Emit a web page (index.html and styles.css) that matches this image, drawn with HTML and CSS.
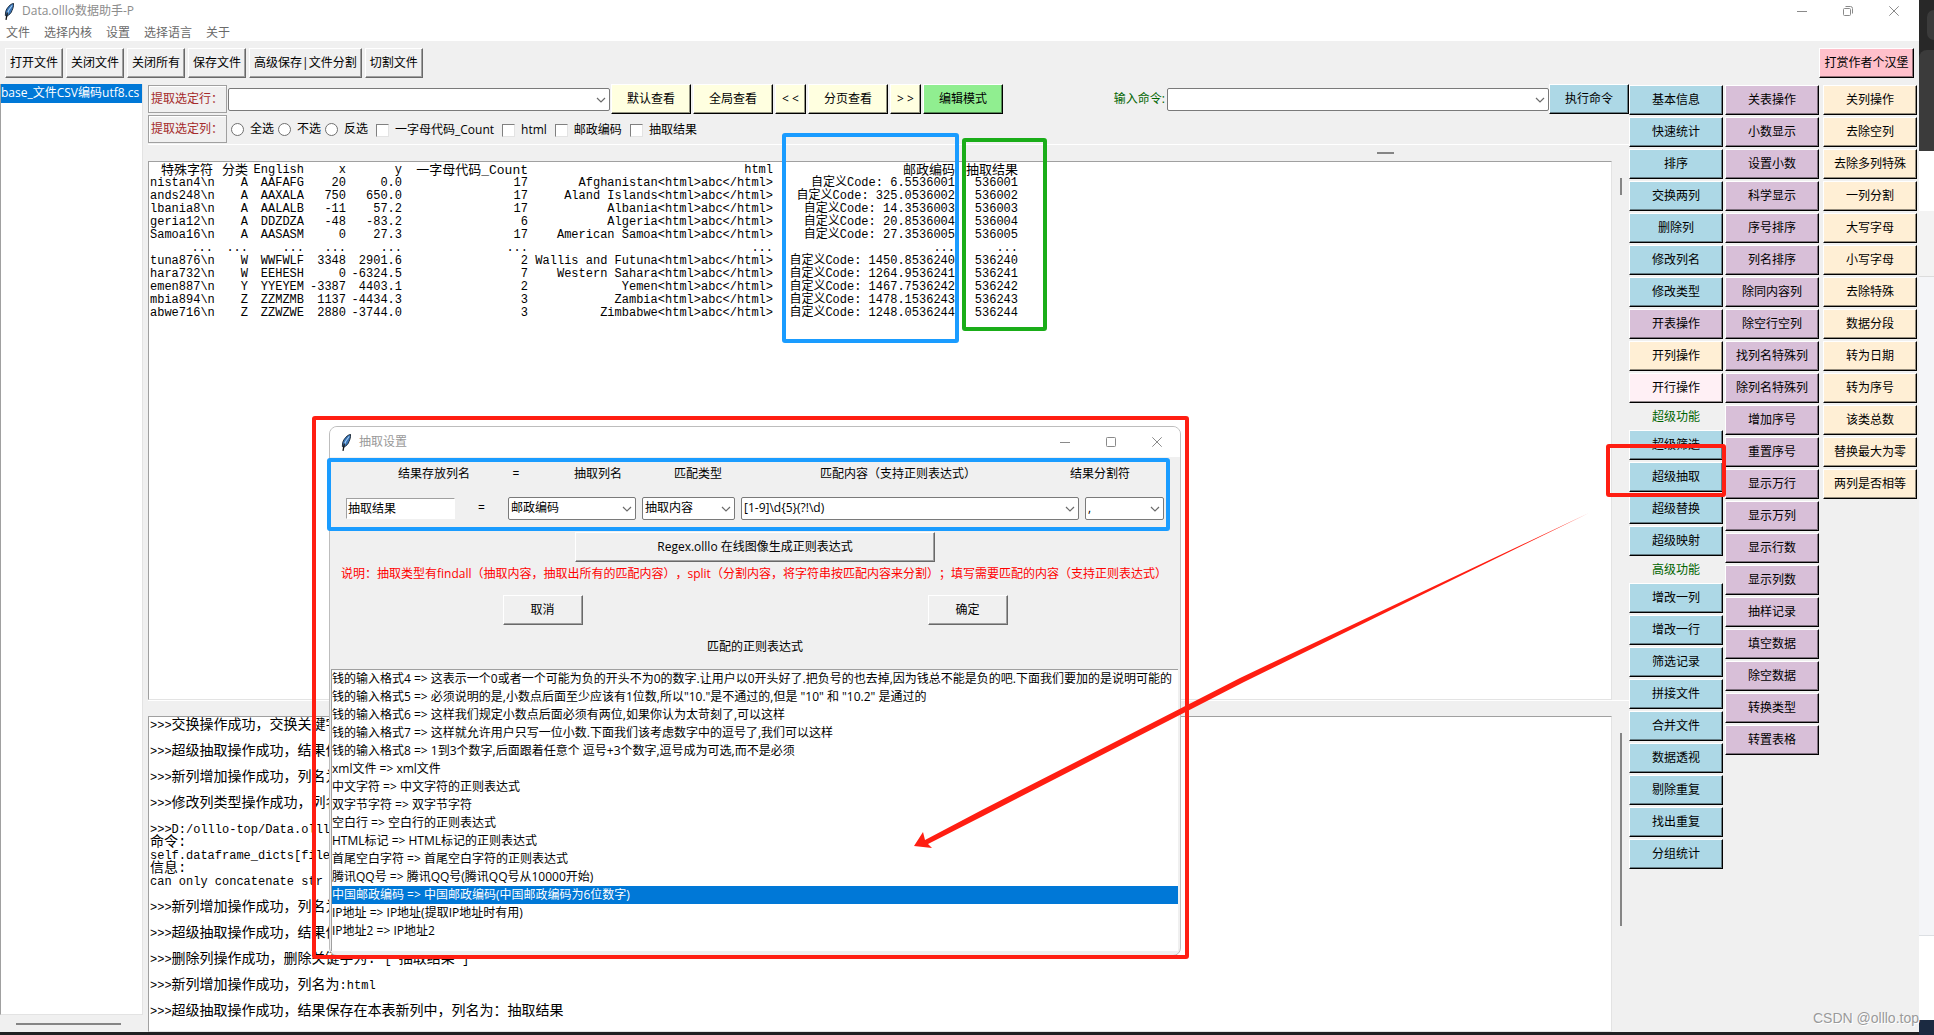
FILE: index.html
```html
<!DOCTYPE html>
<html lang="zh-CN">
<head>
<meta charset="utf-8">
<title>Data.olllo数据助手-P</title>
<link rel="stylesheet" href="styles.css">
</head>
<body>
<svg class="defs" aria-hidden="true">
  <symbol id="chevron" viewBox="0 0 10 6"><path d="M1 1l4 4 4-4" fill="none" stroke="#6b6b6b" stroke-width="1.2"/></symbol>
  <symbol id="feather" viewBox="0 0 10 17">
    <path d="M9.5.3C6.500 1 3 4.500 1.700 8.500L1.300 12.500 2.500 13.500C5 12 7.500 10 8 7.500 9 5.500 9.800 3 9.500.3z" fill="#3a76b8" stroke="#16212e" stroke-width=".9"/>
    <path d="M8.200 2.500C6 5 4 8 3.200 11" fill="none" stroke="#a9d1f5" stroke-width="1.100"/>
    <path d="M3.400 9.500L2 16.800" fill="none" stroke="#111" stroke-width="1.300"/>
  </symbol>
  <symbol id="minimize" viewBox="0 0 10 10"><path d="M0 5.500h10" stroke="#8a8a8a"/></symbol>
  <symbol id="maximize" viewBox="0 0 10 10"><rect x=".5" y=".5" width="9" height="9" rx=".8" fill="none" stroke="#8a8a8a"/></symbol>
  <symbol id="restore" viewBox="0 0 10 10"><rect x=".5" y="2.500" width="7" height="7" rx="1" fill="none" stroke="#8a8a8a"/><path d="M2.500.5h5a2 2 0 0 1 2 2v5" fill="none" stroke="#8a8a8a"/></symbol>
  <symbol id="close" viewBox="0 0 10 10"><path d="M.3.3l9.400 9.400M9.700.3L.3 9.700" stroke="#8a8a8a"/></symbol>
</svg>
<div class="desktop">
  <div class="app">
    <header class="titlebar">
      <svg class="feather"><use href="#feather"/></svg>
      <span class="title">Data.olllo数据助手-P</span>
      <div class="window-controls">
        <button aria-label="最小化"><svg><use href="#minimize"/></svg></button>
        <button aria-label="还原"><svg><use href="#restore"/></svg></button>
        <button aria-label="关闭"><svg><use href="#close"/></svg></button>
      </div>
    </header>
    <nav class="menubar">
      <a href="#">文件</a><a href="#">选择内核</a><a href="#">设置</a><a href="#">选择语言</a><a href="#">关于</a>
    </nav>
    <div class="toolbar">
      <button class="btn">打开文件</button>
      <button class="btn">关闭文件</button>
      <button class="btn">关闭所有</button>
      <button class="btn">保存文件</button>
      <button class="btn">高级保存|文件分割</button>
      <button class="btn">切割文件</button>
      <button class="btn pink push">打赏作者个汉堡</button>
    </div>
    <div class="workspace">
      <aside class="files">
        <ul class="file-list" role="listbox" aria-label="文件">
          <li role="option" aria-selected="true">base_文件CSV编码utf8.cs</li>
        </ul>
        <div class="file-scroll"></div>
      </aside>
      <main class="main">
        <div class="control-row">
          <label class="tag" for="rows">提取选定行：</label>
          <span class="combo rows"><select id="rows"><option></option></select><svg><use href="#chevron"/></svg></span>
          <button class="btn yellow wide">默认查看</button>
          <button class="btn yellow wide">全局查看</button>
          <button class="btn yellow step">&lt; &lt;</button>
          <button class="btn yellow wide">分页查看</button>
          <button class="btn yellow step">&gt; &gt;</button>
          <button class="btn green wide">编辑模式</button>
          <label class="command-label" for="command">输入命令:</label>
          <span class="combo command"><select id="command"><option></option></select><svg><use href="#chevron"/></svg></span>
          <button class="btn blue run">执行命令</button>
        </div>
        <div class="column-row">
          <span class="tag">提取选定列：</span>
          <label class="choice"><input type="radio" name="pick">全选</label>
          <label class="choice"><input type="radio" name="pick">不选</label>
          <label class="choice"><input type="radio" name="pick">反选</label>
          <label class="choice check"><input type="checkbox">一字母代码_Count</label>
          <label class="choice check"><input type="checkbox">html</label>
          <label class="choice check"><input type="checkbox">邮政编码</label>
          <label class="choice check"><input type="checkbox">抽取结果</label>
        </div>
        <div class="sash"><span class="grip"></span></div>
        <div class="pane data-pane">
          <div class="textbox">
            <table class="data">
              <colgroup><col class="c1"><col class="c2"><col class="c3"><col class="c4"><col class="c5"><col class="c6"><col class="c7"><col class="c8"><col class="c9"></colgroup>
              <thead><tr><th>特殊字符</th><th>分类</th><th class="latin">English</th><th class="latin">x</th><th class="latin">y</th><th>一字母代码_Count</th><th class="latin">html</th><th>邮政编码</th><th>抽取结果</th></tr></thead>
              <tbody>
              <tr><td>nistan4\n</td><td>A</td><td>AAFAFG</td><td>20</td><td>0.0</td><td>17</td><td>Afghanistan&lt;html&gt;abc&lt;/html&gt;</td><td>自定义Code: 6.5536001</td><td>536001</td></tr>
              <tr><td>ands248\n</td><td>A</td><td>AAXALA</td><td>750</td><td>650.0</td><td>17</td><td>Aland Islands&lt;html&gt;abc&lt;/html&gt;</td><td>自定义Code: 325.0536002</td><td>536002</td></tr>
              <tr><td>lbania8\n</td><td>A</td><td>AALALB</td><td>-11</td><td>57.2</td><td>17</td><td>Albania&lt;html&gt;abc&lt;/html&gt;</td><td>自定义Code: 14.3536003</td><td>536003</td></tr>
              <tr><td>geria12\n</td><td>A</td><td>DDZDZA</td><td>-48</td><td>-83.2</td><td>6</td><td>Algeria&lt;html&gt;abc&lt;/html&gt;</td><td>自定义Code: 20.8536004</td><td>536004</td></tr>
              <tr><td>Samoa16\n</td><td>A</td><td>AASASM</td><td>0</td><td>27.3</td><td>17</td><td>American Samoa&lt;html&gt;abc&lt;/html&gt;</td><td>自定义Code: 27.3536005</td><td>536005</td></tr>
              <tr><td>...</td><td>...</td><td>...</td><td>...</td><td>...</td><td>...</td><td>...</td><td>...</td><td>...</td></tr>
              <tr><td>tuna876\n</td><td>W</td><td>WWFWLF</td><td>3348</td><td>2901.6</td><td>2</td><td>Wallis and Futuna&lt;html&gt;abc&lt;/html&gt;</td><td>自定义Code: 1450.8536240</td><td>536240</td></tr>
              <tr><td>hara732\n</td><td>W</td><td>EEHESH</td><td>0</td><td>-6324.5</td><td>7</td><td>Western Sahara&lt;html&gt;abc&lt;/html&gt;</td><td>自定义Code: 1264.9536241</td><td>536241</td></tr>
              <tr><td>emen887\n</td><td>Y</td><td>YYEYEM</td><td>-3387</td><td>4403.1</td><td>2</td><td>Yemen&lt;html&gt;abc&lt;/html&gt;</td><td>自定义Code: 1467.7536242</td><td>536242</td></tr>
              <tr><td>mbia894\n</td><td>Z</td><td>ZZMZMB</td><td>1137</td><td>-4434.3</td><td>3</td><td>Zambia&lt;html&gt;abc&lt;/html&gt;</td><td>自定义Code: 1478.1536243</td><td>536243</td></tr>
              <tr><td>abwe716\n</td><td>Z</td><td>ZZWZWE</td><td>2880</td><td>-3744.0</td><td>3</td><td>Zimbabwe&lt;html&gt;abc&lt;/html&gt;</td><td>自定义Code: 1248.0536244</td><td>536244</td></tr>
              </tbody>
            </table>
          </div>
          <div class="vscroll"><span class="thumb short"></span></div>
        </div>
        <div class="divider"></div>
        <div class="pane log-pane">
          <div class="textbox log">
            <p><span class="latin">&gt;&gt;&gt;</span>交换操作成功，交换关键字</p>
            <p><span class="latin">&gt;&gt;&gt;</span>超级抽取操作成功，结果保</p>
            <p><span class="latin">&gt;&gt;&gt;</span>新列增加操作成功，列名为</p>
            <p><span class="latin">&gt;&gt;&gt;</span>修改列类型操作成功，列名</p>
            <p><span class="latin">&gt;&gt;&gt;D:/olllo-top/Data.olllo</span><br>命令:<br><span class="latin">self.dataframe_dicts[filen</span><br>信息:<br><span class="latin">can only concatenate str (</span></p>
            <p><span class="latin">&gt;&gt;&gt;</span>新列增加操作成功，列名为</p>
            <p><span class="latin">&gt;&gt;&gt;</span>超级抽取操作成功，结果保</p>
            <p><span class="latin">&gt;&gt;&gt;</span>删除列操作成功，删除关键字为: <span class="latin">['</span>抽取结果<span class="latin">']</span></p>
            <p><span class="latin">&gt;&gt;&gt;</span>新列增加操作成功，列名为<span class="latin">:html</span></p>
            <p><span class="latin">&gt;&gt;&gt;</span>超级抽取操作成功，结果保存在本表新列中，列名为：抽取结果</p>
          </div>
          <div class="vscroll"><span class="thumb long"></span></div>
        </div>
      </main>
      <div class="actions">
        <div class="action-col">
          <button class="btn blue">基本信息</button>
          <button class="btn blue">快速统计</button>
          <button class="btn blue">排序</button>
          <button class="btn blue">交换两列</button>
          <button class="btn blue">删除列</button>
          <button class="btn blue">修改列名</button>
          <button class="btn blue">修改类型</button>
          <button class="btn purple">开表操作</button>
          <button class="btn cream">开列操作</button>
          <button class="btn blush">开行操作</button>
          <h2>超级功能</h2>
          <button class="btn blue">超级筛选</button>
          <button class="btn blue">超级抽取</button>
          <button class="btn blue">超级替换</button>
          <button class="btn blue">超级映射</button>
          <h2>高级功能</h2>
          <button class="btn blue">增改一列</button>
          <button class="btn blue">增改一行</button>
          <button class="btn blue">筛选记录</button>
          <button class="btn blue">拼接文件</button>
          <button class="btn blue">合并文件</button>
          <button class="btn blue">数据透视</button>
          <button class="btn blue">剔除重复</button>
          <button class="btn blue">找出重复</button>
          <button class="btn blue">分组统计</button>
        </div>
        <div class="action-col">
          <button class="btn purple">关表操作</button>
          <button class="btn purple">小数显示</button>
          <button class="btn purple">设置小数</button>
          <button class="btn purple">科学显示</button>
          <button class="btn purple">序号排序</button>
          <button class="btn purple">列名排序</button>
          <button class="btn purple">除同内容列</button>
          <button class="btn purple">除空行空列</button>
          <button class="btn purple">找列名特殊列</button>
          <button class="btn purple">除列名特殊列</button>
          <button class="btn purple">增加序号</button>
          <button class="btn purple">重置序号</button>
          <button class="btn purple">显示万行</button>
          <button class="btn purple">显示万列</button>
          <button class="btn purple">显示行数</button>
          <button class="btn purple">显示列数</button>
          <button class="btn purple">抽样记录</button>
          <button class="btn purple">填空数据</button>
          <button class="btn purple">除空数据</button>
          <button class="btn purple">转换类型</button>
          <button class="btn purple">转置表格</button>
        </div>
        <div class="action-col last">
          <button class="btn cream">关列操作</button>
          <button class="btn cream">去除空列</button>
          <button class="btn cream">去除多列特殊</button>
          <button class="btn cream">一列分割</button>
          <button class="btn cream">大写字母</button>
          <button class="btn cream">小写字母</button>
          <button class="btn cream">去除特殊</button>
          <button class="btn cream">数据分段</button>
          <button class="btn cream">转为日期</button>
          <button class="btn cream">转为序号</button>
          <button class="btn cream">该类总数</button>
          <button class="btn cream">替换最大为零</button>
          <button class="btn cream">两列是否相等</button>
        </div>
      </div>
    </div>
    <div class="taskbar-edge"></div>
    <span class="watermark">CSDN @olllo.top</span>
  </div>
  <div class="behind" aria-hidden="true">
    <div class="dark"><i class="tab"></i><i class="bar"></i></div>
    <div class="white-top"></div>
    <div class="grey-a"></div>
    <div class="grey-b"></div>
    <div class="white-low"></div>
    <div class="navy"></div>
  </div>
</div>

<section class="dialog" role="dialog" aria-label="抽取设置">
  <header class="dialog-title">
    <svg class="feather"><use href="#feather"/></svg>
    <span class="title">抽取设置</span>
    <div class="window-controls">
      <button aria-label="最小化"><svg><use href="#minimize"/></svg></button>
      <button aria-label="最大化"><svg><use href="#maximize"/></svg></button>
      <button aria-label="关闭"><svg><use href="#close"/></svg></button>
    </div>
  </header>
  <div class="heads">
    <label for="f-name">结果存放列名</label><span>=</span><label for="f-col">抽取列名</label><label for="f-type">匹配类型</label><label for="f-regex">匹配内容（支持正则表达式）</label><label for="f-sep">结果分割符</label>
  </div>
  <div class="fields">
    <input id="f-name" class="entry" type="text" value="抽取结果">
    <span class="eq">=</span>
    <span class="combo col"><select id="f-col"><option>邮政编码</option></select><svg><use href="#chevron"/></svg></span>
    <span class="combo type"><select id="f-type"><option>抽取内容</option></select><svg><use href="#chevron"/></svg></span>
    <span class="combo regex"><select id="f-regex"><option>[1-9]\d{5}(?!\d)</option></select><svg><use href="#chevron"/></svg></span>
    <span class="combo sep"><select id="f-sep"><option>,</option></select><svg><use href="#chevron"/></svg></span>
  </div>
  <button class="btn regex-btn">Regex.olllo 在线图像生成正则表达式</button>
  <p class="hint">说明：抽取类型有findall（抽取内容，抽取出所有的匹配内容），split（分割内容，将字符串按匹配内容来分割）；填写需要匹配的内容（支持正则表达式）</p>
  <div class="answers"><div><button class="btn">取消</button></div><div><button class="btn">确定</button></div></div>
  <h2 class="list-label">匹配的正则表达式</h2>
  <ul class="regex-list" role="listbox" aria-label="匹配的正则表达式">
    <li role="option">钱的输入格式4 =&gt; 这表示一个0或者一个可能为负的开头不为0的数字.让用户以0开头好了.把负号的也去掉,因为钱总不能是负的吧.下面我们要加的是说明可能的</li>
    <li role="option">钱的输入格式5 =&gt; 必须说明的是,小数点后面至少应该有1位数,所以"10."是不通过的,但是 "10" 和 "10.2" 是通过的</li>
    <li role="option">钱的输入格式6 =&gt; 这样我们规定小数点后面必须有两位,如果你认为太苛刻了,可以这样</li>
    <li role="option">钱的输入格式7 =&gt; 这样就允许用户只写一位小数.下面我们该考虑数字中的逗号了,我们可以这样</li>
    <li role="option">钱的输入格式8 =&gt; 1到3个数字,后面跟着任意个 逗号+3个数字,逗号成为可选,而不是必须</li>
    <li role="option">xml文件 =&gt; xml文件</li>
    <li role="option">中文字符 =&gt; 中文字符的正则表达式</li>
    <li role="option">双字节字符 =&gt; 双字节字符</li>
    <li role="option">空白行 =&gt; 空白行的正则表达式</li>
    <li role="option">HTML标记 =&gt; HTML标记的正则表达式</li>
    <li role="option">首尾空白字符 =&gt; 首尾空白字符的正则表达式</li>
    <li role="option">腾讯QQ号 =&gt; 腾讯QQ号(腾讯QQ号从10000开始)</li>
    <li role="option" aria-selected="true">中国邮政编码 =&gt; 中国邮政编码(中国邮政编码为6位数字)</li>
    <li role="option">IP地址 =&gt; IP地址(提取IP地址时有用)</li>
    <li role="option">IP地址2 =&gt; IP地址2</li>
  </ul>
</section>

<div class="mark mark-codes"></div>
<div class="mark mark-results"></div>
<div class="mark mark-action"></div>
<div class="mark mark-dialog"></div>
<div class="mark mark-fields"></div>
<svg class="arrow" viewBox="0 0 680 340"><path d="M0 333L9 319 11 327 66 298 326 165 675 0 330 169 69 303 14 331 18 335z" fill="#ff1e12"/></svg>
</body>
</html>
```
FILE: styles.css
```css
* { box-sizing: border-box; }

body {
  margin: 0;
  position: relative;
  background: #f0f0f0;
  color: #000;
  font: 12px/18px "Open Sans", "Noto Sans CJK SC", sans-serif;
  text-spacing-trim: space-all;
}

button, input, select { font: inherit; color: inherit; }
h2, p, ul { margin: 0; padding: 0; }
h2 { font: inherit; }
ul { list-style: none; }
.defs { position: absolute; width: 0; height: 0; }

/* Window frame */
.desktop { display: flex; min-height: 100vh; }
.app { flex: 1; min-width: 0; display: flex; flex-direction: column; position: relative; }
.titlebar {
  display: flex;
  align-items: center;
  height: 22px;
  padding: 0 8px 0 4px;
  background: #fff;
  color: #8c8c8c;
}
.feather { width: 10px; height: 17px; margin-right: 8px; }
.window-controls { display: flex; gap: 11px; margin-left: auto; }
.window-controls button { width: 35px; height: 18px; padding: 0; border: 0; background: none; line-height: 0; }
.window-controls svg { width: 10px; height: 10px; }
.menubar { display: flex; gap: 14px; height: 19px; padding: 2px 6px 0; background: #fff; line-height: 17px; }
.menubar a { color: #6a6a6a; text-decoration: none; }
.toolbar { display: flex; gap: 3px; padding: 7px 5px 6px; }
.push { margin-left: auto; }

/* Raised buttons */
.btn {
  height: 30px;
  padding: 0 4px;
  border: 1px solid;
  border-color: #fff #696969 #696969 #fff;
  border-radius: 0;
  background: #f0f0f0;
  box-shadow: inset -1px -1px #a0a0a0;
  white-space: nowrap;
}
.yellow, .green, .blue, .purple, .cream, .blush, .pink {
  border-color: #fff #000 #000 #fff;
  box-shadow: inset -1px -1px rgba(0, 0, 0, .42);
}
.yellow { background: #ffffe0; }
.green { background: #90ee90; }
.blue { background: #add8e6; }
.purple { background: #d8bfd8; }
.cream { background: #ffefd5; }
.blush { background: #fff0f5; }
.pink { background: #ffc0cb; }
.toolbar .pink { width: 95px; }

/* Drop-down boxes */
.combo { position: relative; display: flex; height: 23px; }
.combo select {
  width: 100%;
  padding: 0 4px 0 2px;
  border: 1px solid #7a7a7a;
  border-radius: 2px;
  background: #fff;
  appearance: none;
}
.combo svg { position: absolute; right: 4px; top: 9px; width: 10px; height: 6px; pointer-events: none; }

/* Workspace */
.workspace { flex: 1; display: flex; }
.files { display: flex; flex-direction: column; width: 143px; margin-right: 5px; }
.file-list {
  flex: 1;
  border: 1px solid #e3e3e3;
  border-top: 0;
  border-left-color: #a0a0a0;
  background: #fff;
  overflow: hidden;
}
.file-list li { height: 19px; white-space: nowrap; overflow: hidden; }
[aria-selected="true"] { background: #0078d7; color: #fff; }
.file-scroll { height: 2px; margin: 8px 22px 7px 16px; background: #858585; }

.main { flex: 1; min-width: 0; display: flex; flex-direction: column; }
.control-row, .column-row { display: flex; align-items: center; }
.control-row { height: 30px; }
.control-row .btn { margin-right: 2px; }
.control-row .rows { flex: 1 1 382px; margin: 0 1px; }
.control-row .command { flex: 1 1 382px; }
.wide { width: 80px; }
.step { width: 31px; }
.command-label { width: 162px; padding-right: 2px; text-align: right; color: #006400; }
.control-row .run { width: 80px; margin-right: 0; }
.tag {
  width: 79px;
  height: 28px;
  padding: 4px 2px;
  border: 1px solid #a0a0a0;
  box-shadow: inset 1px 1px #fff;
  color: #a52a2a;
  white-space: nowrap;
}
.column-row { gap: 4px; height: 30px; }
.choice { display: flex; align-items: center; gap: 6px; white-space: nowrap; }
.choice input { appearance: none; width: 13px; height: 13px; margin: 0; background: #fff; }
.choice [type="radio"] { border: 1px solid #707070; border-radius: 50%; }
.choice [type="checkbox"] { border: 1px solid; border-color: #808080 #e3e3e3 #e3e3e3 #808080; }
.check { padding: 2px 0 0 4px; }

.sash { height: 17px; padding-top: 7px; border-top: 1px solid #fff; }
.grip { display: block; width: 17px; height: 2px; margin-left: 83%; background: #858585; }
.pane { display: flex; min-height: 0; }
.data-pane { flex: 539 1 0; }
.log-pane { flex: 316 1 0; }
.divider { height: 16px; border-top: 1px solid #fff; }
.textbox {
  flex: 1;
  padding: 2px 1px 0;
  border: 1px solid #a0a0a0;
  border-right-color: #e3e3e3;
  border-bottom-color: #e3e3e3;
  background: #fff;
  overflow: hidden;
  font: 12px/13px "Liberation Mono", "Noto Sans CJK SC", monospace;
}
.vscroll { width: 17px; padding: 17px 8px; }
.thumb { display: block; width: 2px; background: #858585; }
.short { height: 17px; }
.long { height: 193px; }

.data { table-layout: fixed; width: 868px; border-collapse: collapse; text-align: right; }
.data th, .data td { height: 13px; padding: 0; line-height: 13px; white-space: pre; text-align: right; }
.data th { font-size: 13px; font-weight: normal; }
.data .latin { font-size: 12px; }
.c1, .c9 { width: 63px; }
.c2 { width: 35px; }
.c3, .c5 { width: 56px; }
.c4 { width: 42px; }
.c6 { width: 126px; }
.c7 { width: 245px; }
.c8 { width: 182px; }

.log { font-size: 14px; white-space: nowrap; }
.log p { margin-bottom: 13px; }
.log .latin { font-size: 12px; line-height: 12px; }

/* Right-hand action buttons */
.actions { display: flex; gap: 2px; padding: 1px 2px 0 0; }
.action-col { display: flex; flex-direction: column; gap: 2px; width: 94px; }
.action-col.last { margin-left: 2px; }
.action-col h2 { height: 23px; padding-top: 3px; color: #006400; text-align: center; }

.taskbar-edge { height: 3px; background: #202022; }
.watermark {
  position: absolute;
  right: 0;
  bottom: 8px;
  color: #9a9a9a;
  font: 14px/18px "Liberation Sans", sans-serif;
  text-shadow: 1px 1px #fff;
}

/* Windows visible behind the right edge */
.behind { display: flex; flex-direction: column; width: 15px; overflow: hidden; }
.dark { height: 151px; padding: 10px 0 0 8px; background: #282828; }
.dark i { display: block; background: #3b3b3b; }
.tab { height: 30px; border-radius: 8px 0 0 8px; }
.bar { height: 101px; margin: 10px 0 0 -8px; border-radius: 8px 0 0 0; }
.white-top { height: 60px; background: #fff; }
.grey-a { height: 66px; background: #f3f3f3; border-bottom: 1px solid #dcdcdc; }
.grey-b { flex: 1; background: #f4f5f8; border-bottom: 1px solid #dcdfe3; }
.white-low { height: 84px; background: #fff; }
.navy { height: 15px; background: #1b2a41; }

/* Extraction settings window */
.dialog {
  position: absolute;
  left: 329px;
  top: 426px;
  width: 852px;
  display: flex;
  flex-direction: column;
  padding-bottom: 4px;
  border: 1px solid #bdbdbd;
  border-radius: 8px;
  background: #f0f0f0;
  overflow: hidden;
}
.dialog-title { display: flex; align-items: center; height: 30px; padding: 0 6px 0 11px; background: #fff; color: #999; }
.heads {
  display: grid;
  grid-template-columns: 80px 84px 80px 120px 1fr 124px;
  align-items: center;
  height: 34px;
  padding: 0 18px 0 64px;
  text-align: center;
}
.fields { display: flex; align-items: center; gap: 6px; height: 34px; padding: 0 16px; }
.entry { width: 109px; height: 21px; padding: 0 1px; border: 1px solid #fff; border-top-color: #a0a0a0; border-left-color: #a0a0a0; background: #fff; }
.eq { width: 41px; text-align: center; }
.col { width: 128px; }
.type { width: 93px; }
.regex { flex: 1; }
.sep { width: 79px; }
.regex-btn { width: 360px; margin: 7px auto 0; }
.hint { height: 24px; padding: 3px 11px; color: #f00; white-space: nowrap; }
.answers { display: grid; grid-template-columns: 1fr 1fr; padding-top: 9px; text-align: center; }
.answers .btn { width: 80px; }
.list-label { height: 44px; padding-top: 13px; text-align: center; }
.regex-list { height: 282px; margin: 0 2px 0 1px; border-top: 1px solid #a0a0a0; border-left: 1px solid #a0a0a0; background: #fff; overflow: hidden; }
.regex-list li { height: 18px; white-space: nowrap; overflow: hidden; }

/* Highlight frames and pointer drawn over the windows */
.mark { position: absolute; border: 4px solid #ff1e12; border-radius: 3px; pointer-events: none; }
.mark-codes { left: 782px; top: 133px; width: 177px; height: 210px; border-color: #1a9cff; }
.mark-results { left: 962px; top: 138px; width: 85px; height: 193px; border-color: #1aad19; }
.mark-action { left: 1606px; top: 444px; width: 120px; height: 53px; }
.mark-dialog { left: 312px; top: 416px; width: 877px; height: 543px; }
.mark-fields { left: 327px; top: 458px; width: 843px; height: 73px; border-color: #1a9cff; }
.arrow { position: absolute; left: 914px; top: 513px; width: 680px; height: 340px; pointer-events: none; }
```
